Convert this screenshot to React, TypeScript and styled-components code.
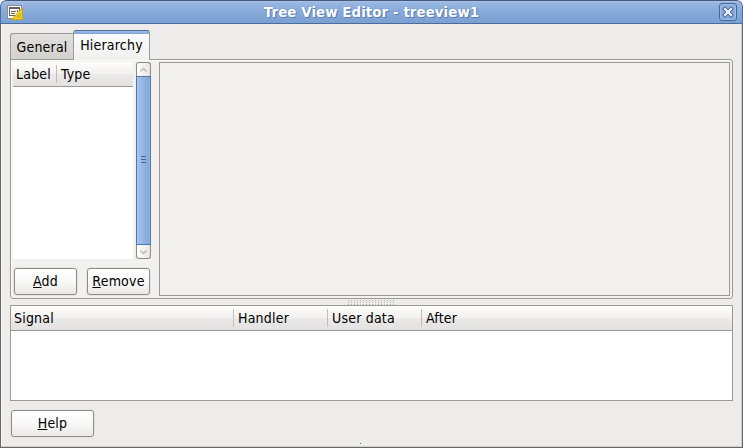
import React from "react";
import styled, { createGlobalStyle } from "styled-components";

const Global = createGlobalStyle`
  * { box-sizing: border-box; }
  body { margin: 0; background: #fff; overflow: hidden; }
`;

const Window = styled.div`
  width: 743px;
  height: 448px;
  display: flex;
  flex-direction: column;
  overflow: hidden;
  border-radius: 6px 6px 0 0;
  background: #edeceb;
  font: 14px/16px "DejaVu Sans Condensed", "DejaVu Sans", sans-serif;
  font-stretch: condensed;
  letter-spacing: 0.2px;
  color: #000;
  cursor: default;
  user-select: none;
`;

const TitleBar = styled.header`
  flex: none;
  height: 24px;
  display: flex;
  align-items: center;
  padding: 0 5px 0 6px;
  border: 1px solid #4a6d9f;
  border-top-color: #47597a;
  border-radius: 6px 6px 0 0;
  background: linear-gradient(#a9c3e9 0, #98b6e2 2px, #86a9d9 11px, #7ba0d1 100%);
`;

const Title = styled.h1`
  flex: 1;
  margin: 0;
  padding-top: 1px;
  text-align: center;
  color: #fff;
  font: bold 13.33px/16px "DejaVu Sans", sans-serif;
  letter-spacing: 0.1px;
  text-shadow: 1px 1px 0 #5a7eb4, 0 0 1px #5a7eb4;
`;

const CloseButton = styled.button`
  width: 18px;
  height: 18px;
  padding: 0;
  display: grid;
  place-items: center;
  border: 1px solid #42679c;
  border-radius: 3px;
  background: linear-gradient(#8fb0de, #83a7d8);
  box-shadow: inset 0 0 0 1px #a0bce5;
`;

const Body = styled.main`
  flex: 1;
  display: flex;
  flex-direction: column;
  padding: 6px 9px 0 9px;
  border: 1px solid #696765;
  border-top: 0;
  box-shadow: inset -1px -1px 0 #d0cecc, inset 1px 0 0 #f8f8f7;
`;

const Tabs = styled.nav`
  display: flex;
  align-items: flex-end;
  height: 30px;
  position: relative;
`;

const Tab = styled.div<{ $active?: boolean }>`
  width: ${(p) => (p.$active ? 77 : 63)}px;
  height: ${(p) => (p.$active ? 30 : 27)}px;
  padding-top: ${(p) => (p.$active ? 6 : 5)}px;
  text-align: center;
  border: 1px solid #9c9a96;
  border-bottom: ${(p) => (p.$active ? 0 : "1px solid #9c9a96")};
  border-right-width: ${(p) => (p.$active ? 1 : 0)}px;
  border-radius: ${(p) => (p.$active ? "3px 3px 0 0" : "3px 0 0 0")};
  background: ${(p) =>
    p.$active
      ? "linear-gradient(#a0bfe9 0, #7ea3d6 3px, #fbfbfb 3px, #f1f0ee 100%)"
      : "linear-gradient(#e2e0de, #d3d1ce)"};
  ${(p) => p.$active && "border-top-color: #4a6d9f;"}
`;

const Notebook = styled.section`
  flex: none;
  height: 240px;
  margin-top: -1px;
  padding: 2px;
  display: flex;
  border: 1px solid #9c9a96;
  border-radius: 0 3px 3px 3px;
  background: #f2f1f0;
  box-shadow: inset 1px 1px 0 #fbfbfa;
`;

const SidePane = styled.div`
  width: 146px;
  display: flex;
  flex-direction: column;
`;

const TreeRow = styled.div`
  display: flex;
  height: 197px;
  gap: 3px;
`;

const Tree = styled.div`
  width: 120px;
  background: #fff;
`;

const HeaderRow = styled.div`
  display: flex;
  align-items: center;
  height: 25px;
  border-bottom: 1px solid #9c9a96;
  background: linear-gradient(#fdfdfc 0, #f2f1f0 50%, #ebeae9 52%, #e3e2e0 100%);
`;

const HeaderCell = styled.div<{ $width?: number; $first?: boolean; $last?: boolean }>`
  width: ${(p) => (p.$width ? `${p.$width}px` : "auto")};
  height: 18px;
  padding-left: ${(p) => (p.$first ? 3 : 4)}px;
  line-height: 18px;
  white-space: nowrap;
  border-right: ${(p) => (p.$last ? 0 : "1px solid #c1bfbc")};
`;

const Scrollbar = styled.div`
  width: 15px;
  display: flex;
  flex-direction: column;
`;

const Stepper = styled.div<{ $down?: boolean }>`
  height: 14px;
  display: grid;
  place-items: center;
  border: 1px solid #8d8b88;
  border-width: ${(p) => (p.$down ? "0 1px 1px" : "1px 1px 0")};
  border-radius: ${(p) => (p.$down ? "0 0 3px 3px" : "3px 3px 0 0")};
  background: linear-gradient(90deg, #fff, #e6e5e3);
`;

const Thumb = styled.div`
  flex: 1;
  display: flex;
  justify-content: center;
  padding-top: 79px;
  border: 1px solid #4f76aa;
  background: linear-gradient(90deg, #a8c4ea, #7fa5d8);
  box-shadow: inset 1px 0 0 #a9c5eb, inset -1px 0 0 #96b6e3;
`;

const ButtonRow = styled.div`
  display: flex;
  gap: 10px;
  padding: 9px 0 0 1px;
`;

const Button = styled.button<{ $width: number }>`
  width: ${(p) => p.$width}px;
  height: 27px;
  padding: 0 0 2px;
  border: 1px solid #8f8d8a;
  border-radius: 3px;
  font: inherit;
  letter-spacing: inherit;
  color: inherit;
  background: linear-gradient(#ffffff, #f8f8f7 50%, #eae9e7);
  box-shadow: 0 0 0 1px #e5e4e2;

  u {
    text-underline-offset: 1px;
    text-decoration-thickness: 1px;
    text-decoration-skip-ink: none;
  }
`;

const Canvas = styled.div`
  flex: 1;
  height: 234px;
  border: 1px solid #9c9a96;
`;

const Gripper = styled.div`
  flex: none;
  display: flex;
  justify-content: center;
  height: 6px;
  padding-top: 1px;
`;

const SignalTable = styled.section`
  flex: none;
  height: 96px;
  border: 1px solid #9c9a96;
  background: #fff;
`;

const Footer = styled.footer`
  display: flex;
  flex-direction: column;
  padding: 9px 0 0 1px;
`;

const Dot = styled.div`
  width: 1px;
  height: 1px;
  margin: 6px 0 0 349px;
  background: #5c5a58;
`;

const dots = Array.from({ length: 16 }, (_, i) => i * 3);

export default function App() {
  return (
    <>
      <Global />
      <Window>
        <TitleBar>
          <svg width="17" height="16" viewBox="0 0 17 16" shapeRendering="crispEdges">
            <path d="M0 1h15v14H0z" fill="#8f8d88" />
            <path d="M1 2h13v12H1z" fill="#fafaf8" />
            <path d="M2 3h11v9H2zM3 5v6h9V5z" fill="#66635e" fillRule="evenodd" />
            <path d="M4 7h5v1H4zM4 9h4v1H4zM10 6h1v2h-1z" fill="#66635e" />
            <path d="M15.5 4v11.5H4.5z" fill="#f0cf1e" stroke="#c9a80f" shapeRendering="auto" />
            <path d="M13 10v3H10z" fill="#d8d6c8" stroke="#bd9c0c" strokeWidth=".8" shapeRendering="auto" />
          </svg>
          <Title>Tree View Editor - treeview1</Title>
          <CloseButton aria-label="Close">
            <svg width="12" height="12" viewBox="0 0 12 12">
              <path d="M3 3l6 6M9 3l-6 6" stroke="#42679c" strokeWidth="4" strokeLinecap="square" />
              <path d="M3 3l6 6M9 3L3 9" stroke="#f4f7fc" strokeWidth="2.1" strokeLinecap="square" />
            </svg>
          </CloseButton>
        </TitleBar>
        <Body>
          <Tabs>
            <Tab>General</Tab>
            <Tab $active>Hierarchy</Tab>
          </Tabs>
          <Notebook>
            <SidePane>
              <TreeRow>
                <Tree>
                  <HeaderRow>
                    <HeaderCell $width={44} $first>Label</HeaderCell>
                    <HeaderCell $last>Type</HeaderCell>
                  </HeaderRow>
                </Tree>
                <Scrollbar>
                  <Stepper>
                    <svg width="9" height="6" viewBox="0 0 9 6" fill="none" stroke="#b8b6b3" strokeWidth="1.3">
                      <path d="M1.5 4.5l3-3 3 3" />
                    </svg>
                  </Stepper>
                  <Thumb>
                    <svg width="5" height="7" viewBox="0 0 5 7" shapeRendering="crispEdges">
                      <path d="M0 0h5v1H0zM0 3h5v1H0zM0 6h5v1H0z" fill="#3f6494" />
                    </svg>
                  </Thumb>
                  <Stepper $down>
                    <svg width="9" height="6" viewBox="0 0 9 6" fill="none" stroke="#b8b6b3" strokeWidth="1.3">
                      <path d="M1.5 1.5l3 3 3-3" />
                    </svg>
                  </Stepper>
                </Scrollbar>
              </TreeRow>
              <ButtonRow>
                <Button $width={63}><u>A</u>dd</Button>
                <Button $width={63}><u>R</u>emove</Button>
              </ButtonRow>
            </SidePane>
            <Canvas />
          </Notebook>
          <Gripper>
            <svg width="47" height="5" viewBox="0 0 47 5" shapeRendering="crispEdges">
              {dots.map((x) => (
                <path key={x} d={`M${x} 0h1v1h-1zM${x} 2h1v1h-1zM${x} 4h1v1h-1z`} fill="#b1afac" />
              ))}
            </svg>
          </Gripper>
          <SignalTable>
            <HeaderRow>
              <HeaderCell $width={223} $first>Signal</HeaderCell>
              <HeaderCell $width={94}>Handler</HeaderCell>
              <HeaderCell $width={94}>User data</HeaderCell>
              <HeaderCell $last>After</HeaderCell>
            </HeaderRow>
          </SignalTable>
          <Footer>
            <Button $width={83}><u>H</u>elp</Button>
            <Dot />
          </Footer>
        </Body>
      </Window>
    </>
  );
}
